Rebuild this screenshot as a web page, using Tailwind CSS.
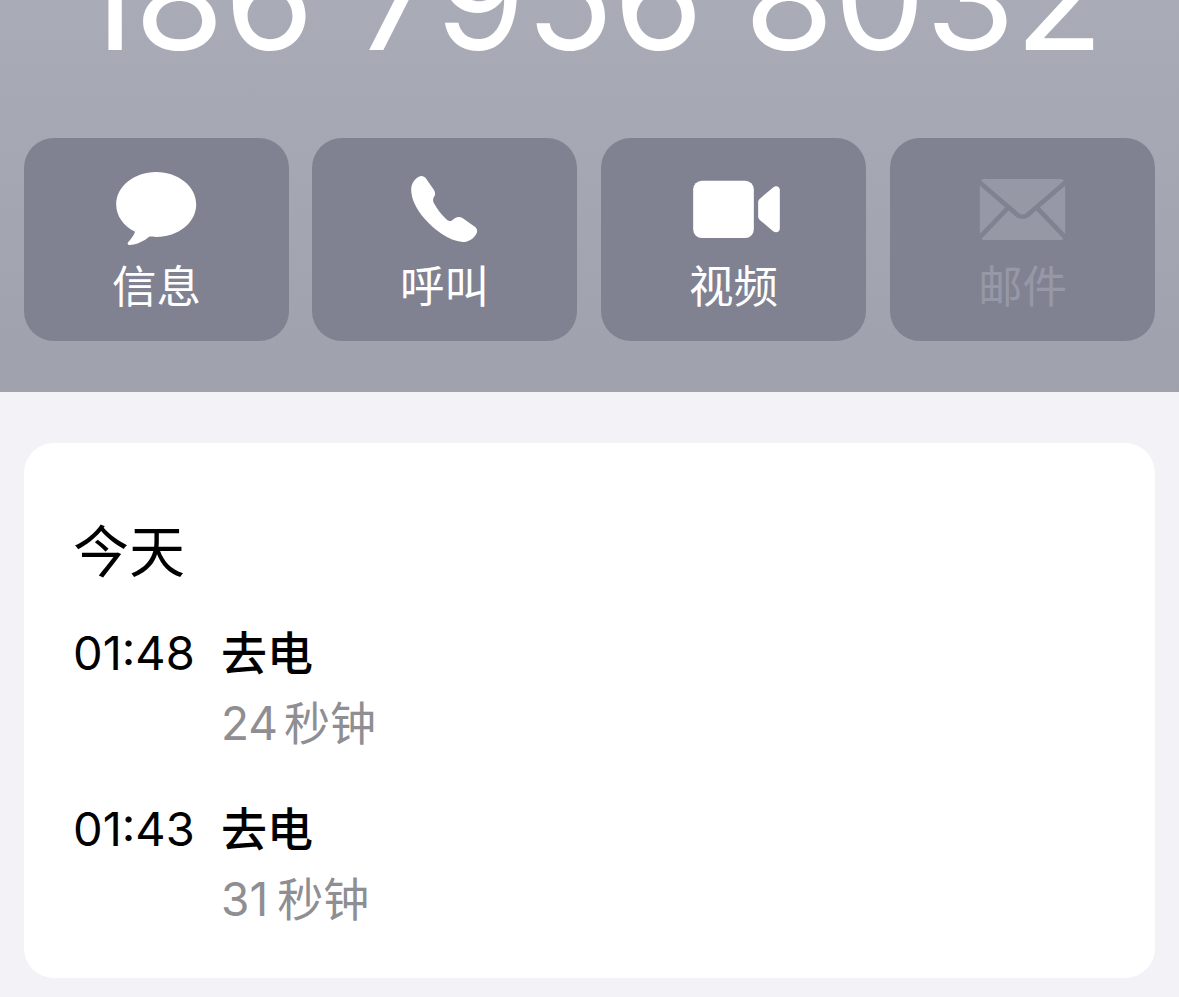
<!DOCTYPE html>
<html lang="zh-CN">
<head>
    <meta charset="UTF-8">
    <meta name="viewport" content="width=device-width, initial-scale=1.0">
    <title>通话详情</title>
    <script src="https://cdn.jsdelivr.net/npm/@tailwindcss/browser@4"></script>
</head>
<body class="bg-[#f2f2f7] h-[997px] overflow-hidden font-['Inter','Noto_Sans_CJK_SC',sans-serif]">

    <!-- header -->
    <div class="h-[392px] overflow-hidden bg-gradient-to-b from-[#a9abb7] to-[#9fa1ad] px-6">
        <h1 class="h-[150px] -mt-[77px] text-center text-white text-[145px] font-normal leading-[150px] whitespace-nowrap">186 7956 8032</h1>

        <div class="flex mt-[65px]">
            <div class="w-[265px] h-[203px] rounded-[30px] bg-[#808292] flex flex-col items-center pt-[30px] text-white">
                <svg class="w-[100px] h-[80px]" viewBox="106.5 168 100 80" fill="#fff">
                    <path d="M155.7 172C177.8 172 195.7 186.5 195.7 204.5C195.7 222.5 177.8 237 155.7 237C153 237 151 236.8 149 236.6C144 241 136 245 129 245C127 245 126.6 243.4 127.8 242C130.5 239 133 236 134.6 231.8C123 226 115.7 216 115.7 204.5C115.7 186.5 133.6 172 155.7 172Z"/>
                </svg>
                <span class="mt-[14px] text-[44.5px] leading-[50px]">信息</span>
            </div>
            <div class="ml-[23px] w-[265px] h-[203px] rounded-[30px] bg-[#808292] flex flex-col items-center pt-[30px] text-white">
                <svg class="w-[100px] h-[80px]" viewBox="-1.5 9 300 240" fill="#fff">
                    <path d="M70 35C78 31 87 34 92 41L115 74C120 82 120 90 115 97C112 101 112 108 115 114C124 131 138 150 155 165C159 168 164 169 168 167L178 160C186 155 194 155 202 160L238 185C246 191 247 201 241 209C232 222 217 232 201 231C160 228 116 195 86 160C64 134 47 104 47 73C47 57 56 43 70 35Z"/>
                </svg>
                <span class="mt-[14px] text-[44.5px] leading-[50px]">呼叫</span>
            </div>
            <div class="ml-6 w-[265px] h-[203px] rounded-[30px] bg-[#808292] flex flex-col items-center pt-[30px] text-white">
                <svg class="w-[100px] h-[80px]" viewBox="10.5 9 300 240" fill="#fff">
                    <rect x="38" y="47" width="182" height="172" rx="26"/>
                    <path d="M233 112C233 107 235 104 238 101L277 68C287 60 298 65 298 76V190C298 201 287 206 277 198L238 165C235 162 233 159 233 154Z"/>
                </svg>
                <span class="mt-[14px] text-[44.5px] leading-[50px]">视频</span>
            </div>
            <div class="ml-6 w-[265px] h-[203px] rounded-[30px] bg-[#808292] flex flex-col items-center pt-[30px] text-[#9698a6]">
                <svg class="w-[100px] h-[80px]" viewBox="22.5 9 300 240" fill="none">
                    <rect x="43" y="42" width="256" height="183" rx="14" fill="#9698a6"/>
                    <path d="M40 50L156 150C164 157 178 157 186 150L302 50M128 128L42 218M214 128L300 218" stroke="#808292" stroke-width="14"/>
                </svg>
                <span class="mt-[14px] text-[44.5px] leading-[50px]">邮件</span>
            </div>
        </div>
    </div>

    <!-- call history -->
    <div class="mx-6 mt-[51px] rounded-[30px] bg-white pl-[49px] pr-[50px] pt-[79px] pb-[51px]">
        <div class="text-[56px] leading-[60px] text-black">今天</div>

        <div class="flex mt-[43px]">
            <div class="w-[148px] text-[47px] leading-[56px] text-black">01:48</div>
            <div>
                <div class="text-[46px] leading-[56px] font-medium text-black">去电</div>
                <div class="mt-[14px] text-[46px] leading-[56px] text-[#8e8e93]"><span class="mr-[6px]">24</span>秒钟</div>
            </div>
        </div>

        <div class="flex mt-[50px]">
            <div class="w-[148px] text-[47px] leading-[56px] text-black">01:43</div>
            <div>
                <div class="text-[46px] leading-[56px] font-medium text-black">去电</div>
                <div class="mt-[14px] text-[46px] leading-[56px] text-[#8e8e93]"><span class="mr-[9px]">31</span>秒钟</div>
            </div>
        </div>
    </div>

</body>
</html>
